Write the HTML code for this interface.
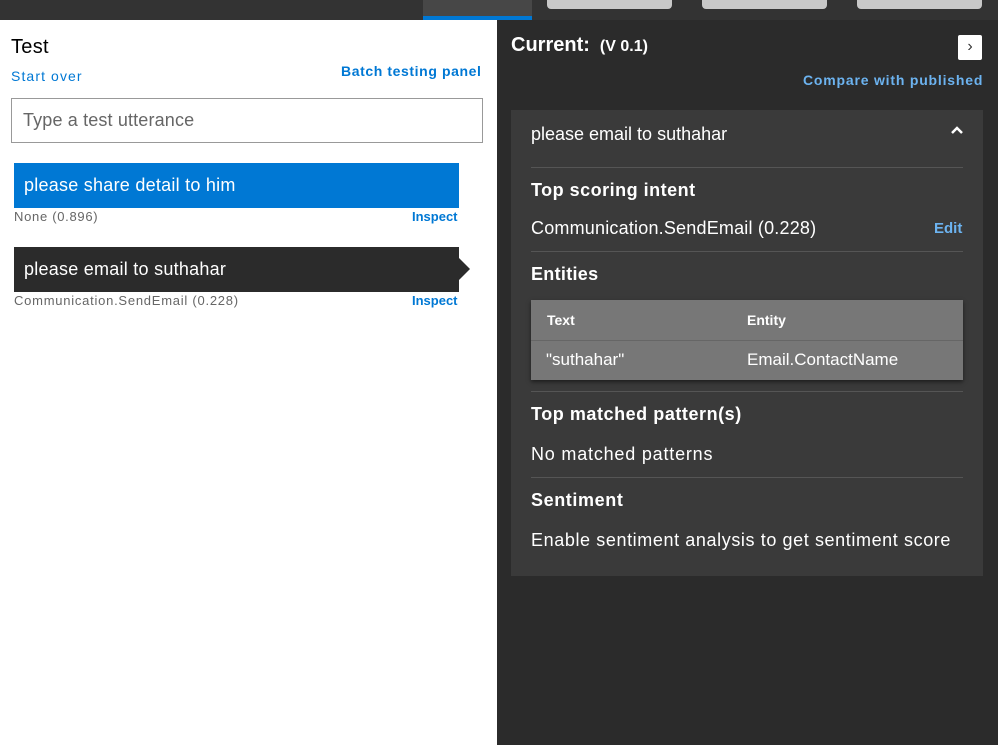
<!DOCTYPE html>
<html><head><style>
*{margin:0;padding:0;box-sizing:border-box}
body{width:998px;height:745px;overflow:hidden;font-family:"Segoe UI","Liberation Sans",sans-serif;background:#fff;position:relative}
.a{position:absolute;white-space:nowrap}
.ar{font-family:"Liberation Sans",Arial,sans-serif}
</style></head><body>
<div class="a" style="left:0;top:0;width:998px;height:20px;background:#333"></div>
<div class="a" style="left:423px;top:0;width:109px;height:20px;background:#474747;border-bottom:4px solid #0078d4"></div>
<div class="a" style="left:547px;top:0;width:125px;height:9px;background:#c8c8c8;border-radius:0 0 4px 4px"></div>
<div class="a" style="left:702px;top:0;width:125px;height:9px;background:#c8c8c8;border-radius:0 0 4px 4px"></div>
<div class="a" style="left:857px;top:0;width:125px;height:9px;background:#c8c8c8;border-radius:0 0 4px 4px"></div>

<div class="a" style="left:11px;top:36px;font-size:20px;color:#000;letter-spacing:0.3px">Test</div>
<div class="a" style="left:11px;top:68px;font-size:14px;color:#0078d4;letter-spacing:1.1px">Start over</div>
<div class="a" style="left:341px;top:63px;font-size:14px;color:#0078d4;font-weight:600;letter-spacing:0.6px">Batch testing panel</div>
<div class="a" style="left:11px;top:98px;width:472px;height:45px;border:1px solid #999;font-size:18px;color:#666;padding:11px 11px;letter-spacing:0.15px">Type a test utterance</div>

<div class="a" style="left:14px;top:163px;width:445px;height:45px;background:#0078d4;color:#fff;font-size:18px;padding:12px 10px;letter-spacing:0.25px">please share detail to him</div>
<div class="a" style="left:14px;top:209px;font-size:13px;color:#666;letter-spacing:0.7px">None (0.896)</div>
<div class="a" style="left:412px;top:209px;font-size:13px;color:#0078d4;font-weight:600">Inspect</div>
<div class="a" style="left:14px;top:247px;width:445px;height:45px;background:#2b2b2b;color:#fff;font-size:18px;padding:12px 10px;letter-spacing:0.25px">please email to suthahar</div>
<div class="a" style="left:459px;top:258px;width:0;height:0;border-top:11px solid transparent;border-bottom:11px solid transparent;border-left:11px solid #2b2b2b"></div>
<div class="a" style="left:14px;top:293px;font-size:13px;color:#666;letter-spacing:0.75px">Communication.SendEmail (0.228)</div>
<div class="a" style="left:412px;top:293px;font-size:13px;color:#0078d4;font-weight:600">Inspect</div>

<div class="a" style="left:497px;top:20px;width:501px;height:725px;background:#2b2b2b"></div>
<div class="a" style="left:511px;top:34px;font-size:20px;color:#fff;font-weight:600">Current: <span style="font-size:16px">&nbsp;(V 0.1)</span></div>
<div class="a" style="left:958px;top:35px;width:24px;height:25px;background:#fff;border-radius:2px;color:#333;font-size:16px;text-align:center;line-height:24px">&#8250;</div>
<div class="a" style="left:803px;top:72px;font-size:14px;color:#6cb3f0;font-weight:600;letter-spacing:0.8px">Compare with published</div>

<div class="a" style="left:511px;top:110px;width:472px;height:466px;background:#3a3a3a"></div>
<div class="a ar" style="left:531px;top:124px;font-size:18px;color:#fff">please email to suthahar</div>
<svg class="a" style="left:950px;top:125px" width="14" height="10"><path d="M2 8L7 3L12 8" stroke="#fff" stroke-width="2.5" fill="none"/></svg>
<div class="a" style="left:531px;top:167px;width:432px;height:1px;background:#555"></div>
<div class="a" style="left:531px;top:180px;font-size:18px;color:#fff;font-weight:600;letter-spacing:0.5px">Top scoring intent</div>
<div class="a ar" style="left:531px;top:218px;font-size:18px;color:#fff;letter-spacing:0.2px">Communication.SendEmail (0.228)</div>
<div class="a" style="left:934px;top:220px;font-size:15px;color:#6cb3f0;font-weight:600">Edit</div>
<div class="a" style="left:531px;top:251px;width:432px;height:1px;background:#555"></div>
<div class="a" style="left:531px;top:264px;font-size:18px;color:#fff;font-weight:600;letter-spacing:0.3px">Entities</div>
<div class="a" style="left:531px;top:300px;width:432px;height:80px;background:#777;box-shadow:0 2px 4px rgba(0,0,0,.5)"></div>
<div class="a" style="left:531px;top:340px;width:432px;height:1px;background:#666"></div>
<div class="a ar" style="left:547px;top:312px;font-size:14px;color:#fff;font-weight:bold">Text</div>
<div class="a ar" style="left:747px;top:312px;font-size:14px;color:#fff;font-weight:bold">Entity</div>
<div class="a ar" style="left:546px;top:350px;font-size:17px;color:#fff">"suthahar"</div>
<div class="a ar" style="left:747px;top:350px;font-size:17px;color:#fff">Email.ContactName</div>
<div class="a" style="left:531px;top:391px;width:432px;height:1px;background:#555"></div>
<div class="a" style="left:531px;top:404px;font-size:18px;color:#fff;font-weight:600;letter-spacing:0.55px">Top matched pattern(s)</div>
<div class="a" style="left:531px;top:444px;font-size:18px;color:#fff;letter-spacing:0.8px">No matched patterns</div>
<div class="a" style="left:531px;top:477px;width:432px;height:1px;background:#555"></div>
<div class="a" style="left:531px;top:490px;font-size:18px;color:#fff;font-weight:600;letter-spacing:0.6px">Sentiment</div>
<div class="a" style="left:531px;top:530px;font-size:18px;color:#fff;letter-spacing:0.6px">Enable sentiment analysis to get sentiment score</div>
</body></html>
